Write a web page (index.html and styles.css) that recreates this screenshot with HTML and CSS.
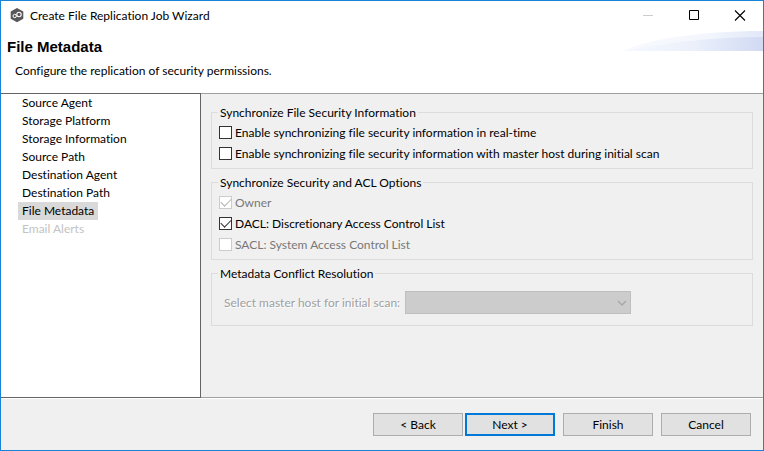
FILE: index.html
```html
<!DOCTYPE html>
<html lang="en">
<head>
<meta charset="utf-8">
<title>Create File Replication Job Wizard</title>
<link rel="stylesheet" href="styles.css">
</head>
<body>
<div class="window">
  <div class="titlebar">
    <svg class="app-icon" width="14" height="16" viewBox="0 0 14 16" aria-hidden="true">
      <path d="M7 0 13.300 3.500v7.200L7 14.200.7 10.700V3.500z" fill="#58585a"/>
      <circle cx="4.700" cy="8" r="1.700" fill="none" stroke="#fff" stroke-width="1"/>
      <circle cx="9" cy="6.500" r="2.200" fill="none" stroke="#fff" stroke-width="1.100"/>
    </svg>
    <span class="caption">Create File Replication Job Wizard</span>
    <div class="window-controls">
      <button type="button" aria-label="Minimize" disabled><svg width="12" height="12" viewBox="0 0 12 12"><path d="M1 5.500h10" stroke="#ccc"/></svg></button>
      <button type="button" aria-label="Maximize"><svg width="12" height="12" viewBox="0 0 12 12"><path d="M1.500 .500h9v9h-9z" fill="none" stroke="#000"/></svg></button>
      <button type="button" aria-label="Close"><svg width="12" height="12" viewBox="0 0 12 12"><path d="M1 .500l10 10M11 .500l-10 10" stroke="#000" stroke-width="1.100"/></svg></button>
    </div>
  </div>

  <header class="page-header">
    <h1>File Metadata</h1>
    <p>Configure the replication of security permissions.</p>
    <svg class="banner" width="140" height="20" viewBox="0 0 140 20" aria-hidden="true">
      <defs>
        <linearGradient id="back"><stop offset="0" stop-color="#f8fafe"/><stop offset=".6" stop-color="#f3f6fd"/><stop offset="1" stop-color="#e2e8f8"/></linearGradient>
        <linearGradient id="front"><stop offset="0" stop-color="#f6f9fe"/><stop offset=".5" stop-color="#ebf0fb"/><stop offset="1" stop-color="#d1daf3"/></linearGradient>
      </defs>
      <path d="M0 20C20 10 70 0 140 0V20z" fill="url(#back)"/>
      <path d="M0 20C40 12 90 6 140 6V20z" fill="url(#front)"/>
    </svg>
  </header>

  <div class="body">
    <nav class="steps" aria-label="Wizard steps">
      <ol>
        <li><a href="#source-agent">Source Agent</a></li>
        <li><a href="#storage-platform">Storage Platform</a></li>
        <li><a href="#storage-information">Storage Information</a></li>
        <li><a href="#source-path">Source Path</a></li>
        <li><a href="#destination-agent">Destination Agent</a></li>
        <li><a href="#destination-path">Destination Path</a></li>
        <li><a class="current" href="#file-metadata" aria-current="step">File Metadata</a></li>
        <li><a class="unavailable" href="#email-alerts" aria-disabled="true">Email Alerts</a></li>
      </ol>
    </nav>

    <main class="content">
      <fieldset>
        <legend>Synchronize File Security Information</legend>
        <label class="option"><input type="checkbox">Enable synchronizing file security information in real-time</label>
        <label class="option"><input type="checkbox">Enable synchronizing file security information with master host during initial scan</label>
      </fieldset>
      <fieldset>
        <legend>Synchronize Security and ACL Options</legend>
        <label class="option disabled"><input type="checkbox" checked disabled>Owner</label>
        <label class="option"><input type="checkbox" checked>DACL: Discretionary Access Control List</label>
        <label class="option disabled"><input type="checkbox" disabled>SACL: System Access Control List</label>
      </fieldset>
      <fieldset>
        <legend>Metadata Conflict Resolution</legend>
        <div class="host-row">
          <label for="master-host">Select master host for initial scan:</label>
          <div class="select-wrap">
            <select id="master-host" disabled></select>
            <svg class="chevron" width="10" height="6" viewBox="0 0 10 6" aria-hidden="true"><path d="M1 1l4 4 4-4" fill="none" stroke="#a6a6a6" stroke-width="1.300"/></svg>
          </div>
        </div>
      </fieldset>
    </main>
  </div>

  <footer class="actions">
    <div class="pager">
      <button type="button">&lt; Back</button>
      <button type="button" class="default">Next &gt;</button>
    </div>
    <button type="button">Finish</button>
    <button type="button">Cancel</button>
  </footer>
</div>
</body>
</html>
```
FILE: styles.css
```css
* {
  box-sizing: border-box;
}

body {
  margin: 0;
  background: #f0f0f0;
  color: #000;
  font: 12px/16px "Segoe UI", Lato, sans-serif;
  font-variant-ligatures: none;
}

button,
select {
  font: inherit;
  color: inherit;
}

.window {
  display: flex;
  flex-direction: column;
  min-height: 100vh;
  border: 1px solid #1883d7;
}

.titlebar {
  display: flex;
  align-items: center;
  height: 30px;
  padding-left: 9px;
  background: #fff;
}

.app-icon {
  margin-right: 6px;
}

.caption {
  flex: 1;
}

.window-controls {
  display: flex;
}

.window-controls button {
  display: grid;
  place-items: center;
  width: 46px;
  height: 28px;
  padding: 0;
  border: 0;
  background: none;
}

.page-header {
  position: relative;
  padding: 8px 6px 14px;
  background: #fff;
}

.page-header h1 {
  margin: 0 0 8px;
  font: bold 15px/16px "Liberation Sans", Arial, sans-serif;
}

.page-header p {
  margin: 0;
  padding-left: 8px;
}

.banner {
  position: absolute;
  top: 0;
  right: 0;
}

.body {
  display: flex;
  flex: 1;
}

.steps {
  width: 200px;
  border: solid #646464;
  border-width: 1px 1px 1px 0;
  background: #fff;
}

.steps ol {
  margin: 0;
  padding: 0 0 0 17px;
  list-style: none;
}

.steps li {
  display: flex;
}

.steps a {
  padding: 0 4px;
  color: inherit;
  line-height: 18px;
  text-decoration: none;
}

.steps .current {
  background: #d9d9d9;
}

.steps .unavailable {
  color: #c3c3c3;
}

.content {
  display: flex;
  flex: 1;
  flex-direction: column;
  gap: 6px;
  padding: 11px 10px;
  border: solid #a0a0a0;
  border-width: 1px 0;
}

fieldset {
  min-width: 0;
  margin: 0;
  padding: 2px 7px 4px;
  border: 1px solid #dcdcdc;
}

legend {
  margin-left: -1px;
  padding: 0 2px;
  line-height: 15px;
}

.option {
  display: flex;
  align-items: center;
  gap: 3px;
  height: 21px;
}

.option.disabled {
  color: #787878;
}

.option input {
  appearance: none;
  display: grid;
  place-items: center;
  flex: none;
  width: 13px;
  height: 13px;
  margin: 0;
  border: 1px solid #333;
  background: #fff;
}

.option input:disabled {
  border-color: #ccc;
}

.option input:checked::before {
  content: "";
  width: 9px;
  height: 5px;
  margin-bottom: 3px;
  border: solid #333;
  border-width: 0 0 1px 1px;
  transform: rotate(-45deg);
}

.option input:disabled:checked::before {
  border-color: #b4b4b4;
}

.host-row {
  display: flex;
  align-items: center;
  gap: 5px;
  padding: 8px 5px 7px;
  color: #a0a0a0;
  text-shadow: 1px 1px #fff;
}

.select-wrap {
  position: relative;
  width: 226px;
}

.select-wrap select {
  appearance: none;
  display: block;
  width: 100%;
  height: 23px;
  border: 1px solid #bfbfbf;
  border-radius: 0;
  background: #ccc;
  opacity: 1;
}

.chevron {
  position: absolute;
  top: 9px;
  right: 4px;
}

.actions {
  display: flex;
  justify-content: flex-end;
  gap: 8px;
  padding: 14px 12px;
  border-top: 1px solid #fff;
}

.pager {
  display: flex;
  gap: 2px;
}

.actions button {
  width: 90px;
  height: 23px;
  padding: 0;
  border: 1px solid #adadad;
  background: #e1e1e1;
}

.actions .default {
  border: 2px solid #0078d7;
}
```
